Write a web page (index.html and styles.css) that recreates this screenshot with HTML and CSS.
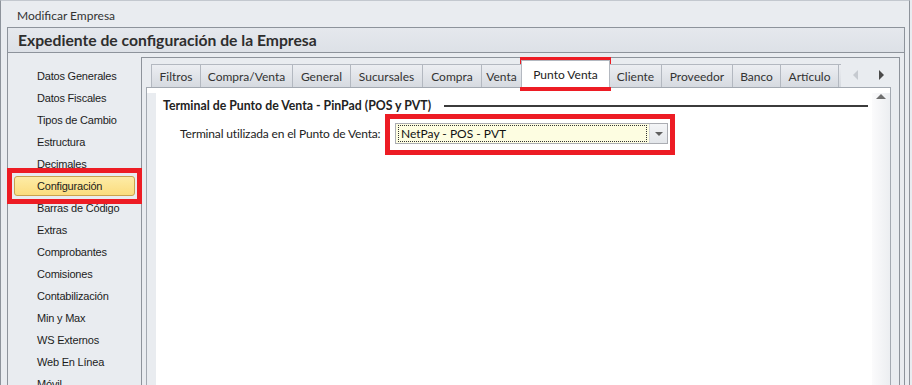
FILE: index.html
```
<!DOCTYPE html>
<html lang="es">
<head>
<meta charset="utf-8">
<title>Modificar Empresa</title>
<link rel="stylesheet" href="styles.css">
</head>
<body>
<div class="window">
  <div class="titlebar">Modificar Empresa</div>
  <div class="group">
    <div class="group-header">Expediente de configuración de la Empresa</div>
    <div class="group-body">
      <ul class="nav">
        <li>Datos Generales</li>
        <li>Datos Fiscales</li>
        <li>Tipos de Cambio</li>
        <li>Estructura</li>
        <li>Decimales</li>
        <li class="active">Configuración</li>
        <li>Barras de Código</li>
        <li>Extras</li>
        <li>Comprobantes</li>
        <li>Comisiones</li>
        <li>Contabilización</li>
        <li>Min y Max</li>
        <li>WS Externos</li>
        <li>Web En Línea</li>
        <li>Móvil</li>
      </ul>
      <div class="panel">
        <div class="tabctl">
          <div class="tabrow">
            <div class="tabs">
              <span class="tab">Filtros</span>
              <span class="tab">Compra/Venta</span>
              <span class="tab">General</span>
              <span class="tab">Sucursales</span>
              <span class="tab">Compra</span>
              <span class="tab">Venta</span>
              <span class="tab selected">Punto Venta</span>
              <span class="tab">Cliente</span>
              <span class="tab">Proveedor</span>
              <span class="tab">Banco</span>
              <span class="tab">Artículo</span>
              <span class="tab"></span>
            </div>
            <div class="tab-arrows">
              <span class="arrow arrow-left"></span>
              <span class="arrow arrow-right"></span>
            </div>
          </div>
          <div class="tabpage">
            <div class="page-inner">
              <div class="gutter"></div>
              <div class="content">
                <div class="section">
                  <span class="section-title">Terminal de Punto de Venta - PinPad (POS y PVT)</span>
                  <span class="rule"></span>
                </div>
                <div class="field">
                  <span class="field-label">Terminal utilizada en el Punto de Venta:</span>
                  <div class="combo">
                    <span class="combo-text"><span class="focus">NetPay - POS - PVT</span></span>
                    <span class="combo-btn"><span class="caret"></span></span>
                  </div>
                </div>
              </div>
              <div class="vscroll"><span class="up"></span></div>
            </div>
          </div>
        </div>
      </div>
    </div>
  </div>
  <div class="mark mark-nav"></div>
  <div class="mark mark-tab"></div>
  <div class="mark mark-combo"></div>
</div>
</body>
</html>
```
FILE: styles.css
```
* { box-sizing: border-box; }
html, body { margin: 0; padding: 0; }
body {
  background: #e9ecf0;
  font-family: Lato, "Liberation Sans", sans-serif;
  font-size: 12px;
  color: #2b2b2b;
  width: 912px;
  height: 385px;
  overflow: hidden;
}
.window {
  position: relative;
  width: 910px;
  height: 385px;
  border: 1px solid #8d939b;
  border-top-color: #c3c8cf;
  border-bottom: none;
  background: #e9ecf0;
  overflow: hidden;
}
.titlebar {
  height: 26px;
  padding-left: 16px;
  line-height: 30px;
  font-size: 12px;
  color: #333;
}
.group {
  margin-left: 6px;
  width: 898px;
  height: 400px;
  border: 1px solid #8d939b;
  border-bottom: none;
}
.group-header {
  height: 25px;
  border-bottom: 1px solid #8d939b;
  background: linear-gradient(#e5e8ed, #dde1e7);
  padding-left: 10px;
  font-weight: bold;
  font-size: 15.7px;
  line-height: 25px;
  color: #2e2e2e;
}
.group-body {
  display: flex;
  align-items: flex-start;
}
.nav {
  list-style: none;
  margin: 0;
  padding: 12px 0 0 0;
  width: 133px;
  font-family: "Liberation Sans", sans-serif;
  font-size: 11px;
  letter-spacing: -0.2px;
  color: #1c1c1c;
}
.nav li {
  height: 22px;
  margin: 0 6px;
  padding-left: 23px;
  line-height: 22px;
  white-space: nowrap;
}
.nav li.active {
  height: 20px;
  margin: 1px 6px;
  border: 1px solid #c9a24f;
  border-radius: 3px;
  background: linear-gradient(#fdeca6, #fbdc7e);
  padding-left: 22px;
  line-height: 18px;
}
.panel {
  margin-top: 4px;
  width: 759px;
  height: 400px;
  border: 1px solid #8d939b;
  border-bottom: none;
  padding: 6px 8px 0 4px;
}
.tabctl { display: flex; flex-direction: column; }
.tabrow {
  display: flex;
  height: 23px;
  position: relative;
  z-index: 1;
}
.tabs {
  flex: none;
  display: flex;
  align-items: flex-end;
  width: 695px;
  height: 27px;
  margin-top: -4px;
  padding-left: 5px;
  overflow: hidden;
}
.tab {
  flex: none;
  height: 23px;
  margin-left: -1px;
  border: 1px solid #b3b8c0;
  border-bottom: none;
  background: linear-gradient(#eceef2, #d6dae0);
  text-align: center;
  line-height: 24px;
  color: #333;
  white-space: nowrap;
}
.tab:first-child { margin-left: 0; }
.tab:nth-child(1) { width: 50px; }
.tab:nth-child(2) { width: 93px; }
.tab:nth-child(3) { width: 59px; }
.tab:nth-child(4) { width: 73px; }
.tab:nth-child(5) { width: 60px; }
.tab:nth-child(6) { width: 41px; }
.tab:nth-child(7) { width: 89px; }
.tab:nth-child(8) { width: 53px; }
.tab:nth-child(9) { width: 72px; }
.tab:nth-child(10) { width: 49px; }
.tab:nth-child(11) { width: 59px; }
.tab:nth-child(12) { width: 60px; }
.tab.selected {
  height: 27px;
  background: #fff;
  line-height: 28px;
  color: #222;
  position: relative;
  z-index: 2;
}
.tab-arrows {
  flex: 1;
  display: flex;
  align-items: center;
  padding-left: 12px;
  gap: 21px;
  padding-bottom: 2px;
}
.arrow {
  width: 0;
  height: 0;
  border-top: 5px solid transparent;
  border-bottom: 5px solid transparent;
}
.arrow-left { border-right: 5px solid #c6cad0; }
.arrow-right { border-left: 5px solid #4a4a4a; }
.tabpage {
  border: 1px solid #a3a9b1;
  border-bottom: none;
  width: 745px;
  height: 320px;
  background: #fff;
  padding-top: 5px;
}
.page-inner {
  display: flex;
  height: 300px;
}
.gutter {
  width: 9px;
  background: #e9ecf0;
}
.content {
  width: 716px;
  background: #fff;
  padding: 4px 4px 0 7px;
}
.section {
  display: flex;
  align-items: center;
  height: 16px;
}
.section-title {
  font-weight: bold;
  font-size: 12.3px;
  color: #222;
  white-space: nowrap;
}
.rule {
  flex: 1;
  height: 2px;
  background: #3b3b3b;
  margin-left: 13px;
  margin-top: 2px;
}
.field {
  display: flex;
  align-items: center;
  margin-top: 10px;
  padding-left: 17px;
}
.field-label {
  color: #222;
  white-space: nowrap;
  letter-spacing: -0.15px;
  width: 215px;
}
.combo {
  display: flex;
  width: 273px;
  height: 21px;
  border: 1px solid #abadb3;
  background: #fdfde1;
}
.combo-text {
  flex: 1;
  padding: 1px 2px;
}
.focus {
  display: block;
  height: 17px;
  border: 1px dotted #333;
  padding-left: 2px;
  line-height: 15px;
  color: #111;
}
.combo-btn {
  width: 18px;
  border-left: 1px solid #d5d8dd;
  background: linear-gradient(#f4f5f7, #e3e6ea);
  display: flex;
  align-items: center;
  justify-content: center;
}
.caret {
  width: 0;
  height: 0;
  border-left: 4px solid transparent;
  border-right: 4px solid transparent;
  border-top: 4px solid #606060;
}
.vscroll {
  width: 18px;
  background: linear-gradient(90deg, #fbfbfc, #eceef1);
  display: flex;
  justify-content: center;
  padding-top: 1px;
}
.up {
  width: 0;
  height: 0;
  border-left: 5px solid transparent;
  border-right: 5px solid transparent;
  border-bottom: 5px solid #6f6f6f;
}
.mark {
  position: absolute;
  border: 5px solid #ed1c24;
}
.mark-nav { left: 6px; top: 167px; width: 135px; height: 36px; }
.mark-tab { left: 519px; top: 56px; width: 91px; height: 34px; }
.mark-combo { left: 384px; top: 113px; width: 290px; height: 41px; }
```
